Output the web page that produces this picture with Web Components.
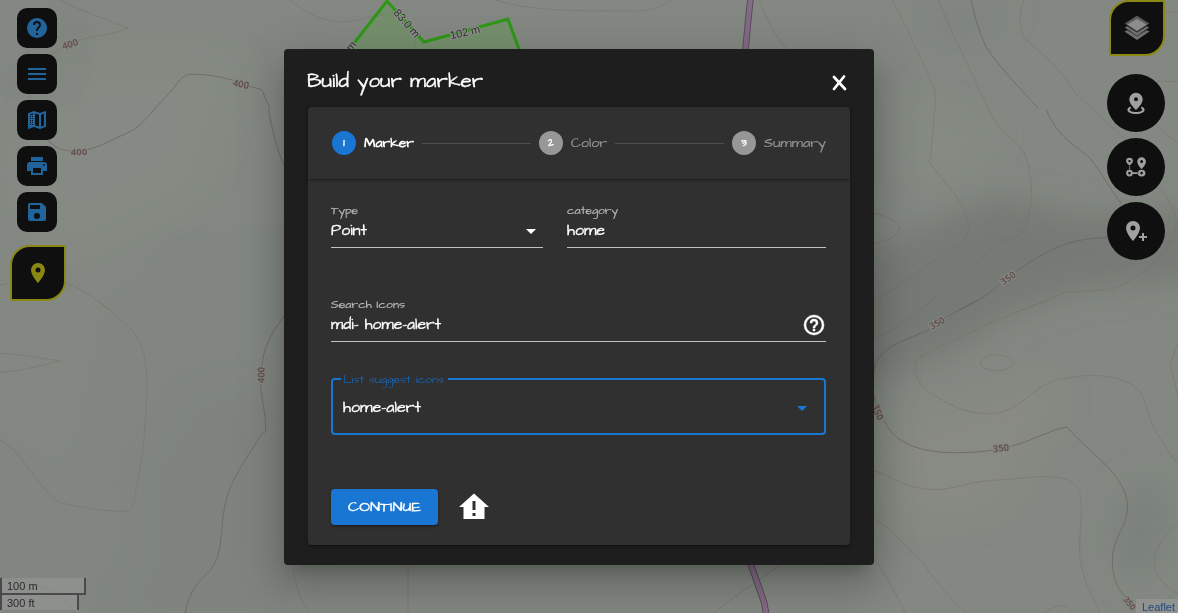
<!DOCTYPE html>
<html lang="en">
<head>
<meta charset="utf-8">
<title>Build your marker</title>
<style>
html,body{margin:0;height:100%;overflow:hidden;background:#848983}
body{font-family:"Architects Daughter",Lato,"Open Sans",sans-serif;color:#fff}
</style>
</head>
<body>
<marker-app></marker-app>
<script>
const ICONS = {
  help: 'M15.07,11.25L14.17,12.17C13.45,12.89 13,13.5 13,15H11V14.5C11,13.39 11.45,12.39 12.17,11.67L13.41,10.41C13.78,10.05 14,9.55 14,9C14,7.89 13.1,7 12,7A2,2 0 0,0 10,9H8A4,4 0 0,1 12,5A4,4 0 0,1 16,9C16,9.88 15.64,10.67 15.07,11.25M13,19H11V17H13M12,2A10,10 0 0,0 2,12A10,10 0 0,0 12,22A10,10 0 0,0 22,12C22,6.47 17.5,2 12,2Z',
  menu: 'M3,6H21V8H3V6M3,11H21V13H3V11M3,16H21V18H3V16Z',
  legend: 'M9,3L3.36,4.9C3.15,4.97 3,5.15 3,5.38V20.5A.5,.5 0 0,0 3.5,21L3.66,20.97L9,18.9L15,21L20.64,19.1C20.85,19.03 21,18.85 21,18.62V3.5A.5,.5 0 0,0 20.5,3L20.34,3.03L15,5.1L9,3M5,6.5L8,5.5V7H5V6.5M5,8H6V9H5M7,8H8V9H7M5,10H6V11H5M7,10H8V11H7M5,12H6V13H5M7,12H8V13H7M5,14H6V15H5M7,14H8V15H7M5,16H6V17H5M7,16H8V17H7M10,5.47L14,6.87V18.53L10,17.13V5.47M19,5.7V17.54L16,18.55V6.86L19,5.7Z',
  print: 'M18,3H6V7H18M19,12A1,1 0 0,1 18,11A1,1 0 0,1 19,10A1,1 0 0,1 20,11A1,1 0 0,1 19,12M16,19H8V14H16M19,8H5A3,3 0 0,0 2,11V17H6V21H18V17H22V11A3,3 0 0,0 19,8Z',
  save: 'M15,9H5V5H15M12,19A3,3 0 0,1 9,16A3,3 0 0,1 12,13A3,3 0 0,1 15,16A3,3 0 0,1 12,19M17,3H5C3.89,3 3,3.9 3,5V19A2,2 0 0,0 5,21H19A2,2 0 0,0 21,19V7L17,3Z',
  pin: 'M12,11.5A2.5,2.5 0 0,1 9.5,9A2.5,2.5 0 0,1 12,6.5A2.5,2.5 0 0,1 14.5,9A2.5,2.5 0 0,1 12,11.5M12,2A7,7 0 0,0 5,9C5,14.25 12,22 12,22C12,22 19,14.25 19,9A7,7 0 0,0 12,2Z',
  radius: 'M12,1.8A6.7,6.7 0 0,1 18.7,8.5C18.7,12.6 13.8,17.2 12,19C10.2,17.2 5.3,12.6 5.3,8.5A6.7,6.7 0 0,1 12,1.8M12,6.2A2,2 0 1,0 12,10.2A2,2 0 1,0 12,6.2M6.3,15.4C4.4,16.2 3.4,17.4 3.4,18.8C3.4,21.3 7,23 12,23C17,23 20.6,21.3 20.6,18.8C20.6,17.4 19.6,16.2 17.7,15.4L16.8,17.2C17.6,17.6 18.2,18.1 18.2,18.7C18.2,20 15.5,21 12,21C8.5,21 5.8,20 5.8,18.7C5.8,18.1 6.4,17.6 7.2,17.2Z',
  path: 'M17.6,2.3A4.3,4.3 0 0,1 21.9,6.6C21.9,9.6 18.8,13 17.6,14.3C16.4,13 13.3,9.6 13.3,6.6A4.3,4.3 0 0,1 17.6,2.3M17.6,5.1A1.5,1.5 0 1,0 17.6,8.1A1.5,1.5 0 1,0 17.6,5.1M5.5,2.7A3.4,3.4 0 0,1 8.9,6.1C8.9,8 6.4,10 5.5,10.7C4.6,10 2.1,8 2.1,6.1A3.4,3.4 0 0,1 5.5,2.7M5.5,4.9A1.2,1.2 0 1,0 5.5,7.3A1.2,1.2 0 1,0 5.5,4.9M5.5,14.7A3.4,3.4 0 1,1 5.5,21.5A3.4,3.4 0 1,1 5.5,14.7M5.5,16.8A1.3,1.3 0 1,0 5.5,19.4A1.3,1.3 0 1,0 5.5,16.8M17.6,14.9A3.3,3.3 0 1,1 17.6,21.4A3.3,3.3 0 1,1 17.6,14.9M17.6,16.8A1.3,1.3 0 1,0 17.6,19.4A1.3,1.3 0 1,0 17.6,16.8M8.9,17.3H14.3V18.9H8.9ZM4.9,11.4H6.2V12.4H4.9ZM4.9,13.2H6.2V14.2H4.9Z',
  plus: 'M9,11.5A2.5,2.5 0 0,0 11.5,9A2.5,2.5 0 0,0 9,6.5A2.5,2.5 0 0,0 6.5,9A2.5,2.5 0 0,0 9,11.5M9,2C12.86,2 16,5.13 16,9C16,14.25 9,22 9,22C9,22 2,14.25 2,9A7,7 0 0,1 9,2M15,17H18V14H20V17H23V19H20V22H18V19H15V17Z',
  helpOutline: 'M11,18H13V16H11V18M12,2A10,10 0 0,0 2,12A10,10 0 0,0 12,22A10,10 0 0,0 22,12A10,10 0 0,0 12,2M12,20C7.59,20 4,16.41 4,12C4,7.59 7.59,4 12,4C16.41,4 20,7.59 20,12C20,16.41 16.41,20 12,20M12,6A4,4 0 0,0 8,10H10A2,2 0 0,1 12,8A2,2 0 0,1 14,10C14,12 11,11.75 11,15H13C13,12.75 16,12.5 16,10A4,4 0 0,0 12,6Z',
  caret: 'M7,10L12,15L17,10H7Z',
  homeAlert: 'M12 3L2 12H5V20H19V12H22L12 3M13 18H11V16H13V18M13 14H11V8H13V14Z'
};
function define(name, html, after) {
  customElements.define(name, class extends HTMLElement {
    connectedCallback() {
      if (this.shadowRoot) return;
      const root = this.attachShadow({mode: 'open'});
      root.innerHTML = typeof html === 'function' ? html(this) : html;
      if (after) after(this, root);
    }
  });
}

/* An icon from the table above, size in pixels. */
define('mdi-icon', el => {
  const s = el.getAttribute('size') || 24;
  return `<style>:host{display:block;width:${s}px;height:${s}px;flex:none}svg{display:block}path{stroke:currentColor;stroke-width:var(--w,0)}</style>
  <svg width="${s}" height="${s}" viewBox="0 0 24 24"><path fill="currentColor" fill-rule="evenodd" d="${ICONS[el.getAttribute('name')]}"/></svg>`;
});

/* A single line of text stretched to the wide proportions of the hand-drawn face. */
define('fit-text', el => `<style>
  :host{display:block;flex:none;width:${el.getAttribute('width')}px;white-space:nowrap}
  span{display:inline-block;transform-origin:0 50%}</style><span><slot></slot></span>`,
  (el, root) => {
    const s = root.querySelector('span');
    const w = s.offsetWidth ? s.getBoundingClientRect().width : 0;
    if (w) s.style.transform = `scaleX(${el.getAttribute('width') / w})`;
  });

define('tool-button', `<style>
  :host{display:flex;align-items:center;justify-content:center;width:40px;height:40px;border-radius:10px;background:#0f0f0f;color:#21649b}
  :host([round]){width:58px;height:58px;border-radius:50%;color:#a0a0a0}
  :host([leaf]){box-sizing:border-box;width:56px;height:56px;border:2px solid #8b8713;border-radius:20px 2px 20px 2px;color:#8b8713}
  </style><slot></slot>`);

define('layers-icon', `<style>:host{display:block}svg{display:block}</style>
<svg width="26" height="26" viewBox="0 0 26 26">
<path fill="#6f6f6f" d="M.4 16.6 3.2 15.2 13 20.3 22.8 15.2 25.6 16.6 13 25Z"/>
<path fill="#6f6f6f" d="M.4 12.4 3.2 11 13 17 22.8 11 25.6 12.4 13 21.2Z" stroke="#0f0f0f" stroke-width=".5"/>
<path fill="#5c5c5c" d="M13 .4 25.6 8.6 13 17 .4 8.6Z" stroke="#0f0f0f" stroke-width=".4"/>
<path fill="#8c8c8c" d="M13 4 22.6 9.6 13 15.8 3.4 9.6Z"/></svg>`);

define('topo-map', `<style>
:host{display:block;width:1178px;height:613px}
svg{display:block}
path,ellipse{vector-effect:non-scaling-stroke}
.c{fill:none;stroke:#766c67;stroke-width:.8;opacity:.55}
.m{fill:none;stroke:#6a5f5b;stroke-width:.9;opacity:.75}
.t text{font:bold 9.5px "Noto Sans","Open Sans",sans-serif;fill:#665250;stroke:#858983;stroke-width:2px;paint-order:stroke;text-anchor:middle}
.d text{font:11px "Liberation Sans",sans-serif;fill:#30302f;stroke:#8d908c;stroke-width:2px;paint-order:stroke;text-anchor:middle}
</style>
<svg width="1178" height="613" viewBox="0 0 1178 613">
<defs><filter id="b" x="-40%" y="-40%" width="180%" height="180%"><feGaussianBlur stdDeviation="16"/></filter>
<filter id="s" x="-40%" y="-40%" width="180%" height="180%"><feGaussianBlur stdDeviation="2"/></filter></defs>
<rect width="1178" height="613" fill="#838982"/>
<g filter="url(#b)">
<path fill="#717670" opacity=".75" d="M850 270 920 225 1000 195 1080 215 1200 210V280L1080 290 1010 315 950 355 900 375 850 378Z"/>
<path fill="#777d77" opacity=".6" d="M1130 480 1170 490 1165 560 1125 585 1110 540Z"/>
<path fill="#8a8a84" opacity=".7" d="M890 430 1050 380 1060 400 1000 510 900 520Z"/>
<path fill="#7c827c" opacity=".5" d="M200 400 284 390V613H120L160 560 150 480ZM910 0H1010L990 45 930 50Z"/>
<path fill="#888d86" opacity=".5" d="M60 60 240 60 200 190 60 260 10 180ZM900 100 1000 130 960 180 900 160Z"/>
</g>
<g filter="url(#s)"><path fill="#7b817a" opacity=".22" d="M0 75 30 45 52 0H82L91 40 89 85 75 108 40 105 0 90ZM190 410 210 405 290 393V613H130L152 582 162 555 155 500ZM0 430 60 460 75 440 105 300 180 235 290 225V613H0Z"/></g>
<g transform="scale(.333333)">
<path class="c" d="M180 0C240 35 340 62 384 85C340 105 270 108 230 123C200 132 175 145 150 170M90 280V305"/>
<path class="m" d="M145 421C165 445 190 452 215 453M262 449C300 440 335 420 375 402C415 385 430 365 480 309C530 262 540 223 572 223C620 222 660 230 700 241M745 258L785 269L810 325M805 328C815 380 830 450 852 495"/>
<path class="c" d="M0 856L34 848M196 848C245 865 290 900 330 930"/>
</g>
<g transform="translate(0 300) scale(.333333)">
<path class="c" d="M293 0 380 75C430 120 440 180 441 260C438 370 430 470 408 570C400 620 395 632 378 634C300 635 230 618 175 607C130 570 90 510 60 470C35 440 15 430 0 422M0 160C60 162 120 175 182 183C120 195 60 215 0 217M0 832C110 850 190 870 224 939"/>
<path class="m" d="M852 48C810 105 790 145 785 202M782 250C784 300 797 330 797 394L782 407C740 475 690 540 676 610C660 680 670 760 635 805C610 835 575 850 555 939"/>
</g>
<path class="c" d="M290 0C320 25 345 25 370 17L397 13M495 0C540 14 600 10 640 11C655 9 665 5 671 0M759 0C767 20 775 36 787 49M415 35V50M292 565C296 585 300 600 309 613M408 565V613M714 613C735 595 760 580 780 565"/>
<g transform="translate(870 0) scale(.333333)">
<path class="c" d="M68 0C105 70 150 170 193 265L197 325M194 328L182 470 177 483C215 545 295 610 295 680C300 730 230 750 190 780C120 835 60 875 12 908M205 0C245 100 310 230 360 335C395 405 430 410 460 455C485 500 490 590 476 640C460 720 440 700 385 732C350 755 300 810 250 850C210 880 180 900 152 930M460 0C445 60 450 90 462 112C500 150 530 165 590 240C610 280 640 300 668 328L765 417M885 33 924 38M862 244H924M858 377 924 430M868 560C905 610 924 650 918 680C900 770 790 850 720 868L580 878C540 900 495 916 455 930M12 640C60 650 85 670 90 685C80 715 40 725 12 731"/>
<path class="m" d="M304 0C310 30 320 80 348 140C390 205 450 265 505 325M528 328C570 420 605 425 655 470C695 515 720 570 755 612M710 713C600 715 540 745 436 815M388 852C350 890 310 910 268 930"/>
</g>
<g transform="translate(870 300) scale(.333333)">
<path class="c" d="M12 112C60 105 100 65 192 0M535 0C400 50 300 95 145 174C130 180 130 245 175 275C240 315 280 340 350 341C460 345 480 250 580 236C680 215 760 230 800 265C830 290 830 345 850 380C875 425 900 460 924 495M12 512C70 530 100 565 190 569C250 570 290 545 370 541C430 538 480 530 520 530C620 530 632 560 634 620C635 680 625 710 630 770C638 840 665 890 690 939M12 658C60 680 100 735 162 792L180 820C220 870 250 905 290 939M12 774C45 820 80 885 106 939M520 939C550 922 590 900 603 939M924 130 900 190 915 250 924 295M924 665C870 720 855 750 853 785C855 830 885 860 924 882"/>
<ellipse class="c" cx="380" cy="188" rx="49" ry="24"/>
<path class="m" d="M322 0 222 55M178 88C100 125 12 145 12 218M12 285 18 315M42 362C75 430 140 455 250 458C300 458 340 455 370 450M416 441C480 425 540 390 590 381C640 435 690 475 720 508C770 565 775 610 772 630C770 680 728 710 727 785C728 850 755 880 772 895"/>
</g>
<path d="M751 -5Q748 20 745 56M750 562 764 602 767 618" fill="none" stroke="#59475c" stroke-width="6.6"/>
<path d="M751 -5Q748 20 745 56M750 562 764 602 767 618" fill="none" stroke="#826b84" stroke-width="4.8"/>
<path d="M348 51 387 1 424 42 508 19 520 52" fill="#4ba32f" fill-opacity=".25" stroke="#2e9715" stroke-width="3"/>
<g class="t">
<text transform="translate(70 44) rotate(-18)" y="3.5">400</text><text transform="translate(241 84) rotate(12)" y="3.5">400</text>
<text transform="translate(79 151)" y="3.5">400</text><text transform="translate(261 375) rotate(-88)" y="3.5">400</text>
<text transform="translate(1008 278) rotate(-35)" y="3.5">350</text><text transform="translate(937 323) rotate(-30)" y="3.5">350</text>
<text transform="translate(878 412) rotate(70)" y="3.5">350</text><text transform="translate(1001 448) rotate(-7)" y="3.5">350</text>
<text transform="translate(1130 603) rotate(52)" y="3.5" style="font-size:8.5px">350</text></g>
<g class="d"><text transform="translate(407 23) rotate(49)" y="4">83.0 m</text><text transform="translate(465 32) rotate(-13)" y="4">102 m</text><text transform="translate(351 46) rotate(-49)" y="4">m</text></g>
</svg>`);

define('map-scale', `<style>
:host{display:flex;flex-direction:column;align-items:flex-start;margin-bottom:3px;font:11px/13px "Liberation Sans",sans-serif;color:#2b2b2b}
div{box-sizing:border-box;border:2px solid #4a4a4a;border-top:0;padding:2px 5px 0;background:rgba(153,153,153,.5);white-space:nowrap}
.m{width:86px;height:17px}.f{width:79px;height:15px;border-bottom:0;padding-top:2px}
</style><div class="m">100 m</div><div class="f">300 ft</div>`);

define('step-item', el => `<style>
:host{display:flex;align-items:center;gap:8px;font-size:14px;line-height:20px;color:#929292;flex:none;-webkit-text-stroke:.2px #929292}
i{display:flex;align-items:center;justify-content:center;width:24px;height:24px;border-radius:50%;background:#979797;color:#fff;font-size:11px;font-style:normal;-webkit-text-stroke:.4px #fff}
:host([active]) i{background:#1976d2;font-weight:400}:host([active]){color:#fff;font-weight:bold;-webkit-text-stroke:0}
</style><i>${el.getAttribute('n')}</i><slot></slot>`);

define('line-field', `<style>
:host{display:flex;flex-direction:column;box-sizing:border-box;height:45px;border-bottom:1px solid #c1c1c1;font-size:15px;line-height:20px}
.l{font-size:11px;line-height:16px;height:18px;color:#b7b7b7;-webkit-text-stroke:.2px #b7b7b7}
.v{display:flex;align-items:center;justify-content:space-between;height:20px;-webkit-text-stroke:.3px #fff}
</style><div class="l"><slot name="label"></slot></div><div class="v"><slot></slot><slot name="end"></slot></div>`);

define('outlined-select', `<style>
:host{display:block}
fieldset{box-sizing:border-box;height:64px;margin:0;padding:0 10px;border:2px solid #1976d2;border-radius:4px;min-width:0}
legend{box-sizing:border-box;width:107px;height:16px;padding:0 2px;font-size:11px;line-height:18px;color:#1b63ab;margin-left:-2px}
.v{display:flex;align-items:center;justify-content:space-between;height:41px;font-size:15px;line-height:20px;-webkit-text-stroke:.3px #fff}
</style><fieldset><legend><slot name="label"></slot></legend><div class="v"><slot></slot><slot name="end"></slot></div></fieldset>`);

define('marker-dialog', `<style>
:host{display:flex;flex-direction:column;box-sizing:border-box;width:590px;height:516px;padding:0 24px 20px;border-radius:4px;background:#1e1e1e;
box-shadow:0 11px 15px -7px rgba(0,0,0,.2),0 24px 38px 3px rgba(0,0,0,.14),0 9px 46px 8px rgba(0,0,0,.12)}
header{display:flex;height:58px;align-items:center;justify-content:space-between;font-size:20px;line-height:28px;padding:6px 3px 0 0;box-sizing:border-box;margin-left:-1px;-webkit-text-stroke:.3px #fff}
.card{width:542px;height:438px;border-radius:4px;background:#303030;box-shadow:0 3px 1px -2px rgba(0,0,0,.2),0 2px 2px 0 rgba(0,0,0,.14),0 1px 5px 0 rgba(0,0,0,.12)}
.steps{display:flex;align-items:center;gap:8px;box-sizing:border-box;height:72px;padding:0 24px;box-shadow:0 3px 1px -2px rgba(0,0,0,.2),0 1px 3px 0 rgba(0,0,0,.25)}
hr{flex:1;height:1px;border:0;margin:0;background:#4e4e4e}
.body{padding:24px 24px 0 23px}
.row{display:grid;grid-template-columns:212px 259px;gap:24px;margin-bottom:49px}
.sel{margin-top:29px}
.act{display:flex;align-items:center;margin-top:54px;height:36px}
.btn{display:flex;align-items:center;justify-content:center;width:107px;height:36px;border-radius:4px;background:#1976d2;font-size:14px;line-height:20px;margin-right:18px;-webkit-text-stroke:.3px #fff;
box-shadow:0 3px 1px -2px rgba(0,0,0,.2),0 2px 2px 0 rgba(0,0,0,.14),0 1px 5px 0 rgba(0,0,0,.12)}
</style>
<header><fit-text width="176">Build your marker</fit-text>
<svg width="15" height="16" viewBox="0 0 15 16" style="margin-top:4px"><path d="M2 2 13 14M12 1.5 2 14" fill="none" stroke="#fff" stroke-width="2.7" stroke-linecap="round"/></svg></header>
<div class="card"><div class="steps">
<step-item n="1" active><fit-text width="50">Marker</fit-text></step-item><hr>
<step-item n="2"><fit-text width="36">Color</fit-text></step-item><hr>
<step-item n="3"><fit-text width="62">Summary</fit-text></step-item></div>
<div class="body"><div class="row">
<line-field><fit-text slot="label" width="27">Type</fit-text><fit-text width="36">Point</fit-text><mdi-icon slot="end" name="caret"></mdi-icon></line-field>
<line-field><fit-text slot="label" width="51">category</fit-text><fit-text width="38">home</fit-text></line-field></div>
<line-field><fit-text slot="label" width="74">Search Icons</fit-text><fit-text width="110">mdi- home-alert</fit-text><mdi-icon slot="end" name="helpOutline" style="--w:.5"></mdi-icon></line-field>
<outlined-select class="sel"><fit-text slot="label" width="101">List suggest icons</fit-text><fit-text width="78">home-alert</fit-text><mdi-icon slot="end" name="caret" style="color:#1976d2"></mdi-icon></outlined-select>
<div class="act"><div class="btn"><fit-text width="73">CONTINUE</fit-text></div><mdi-icon name="homeAlert" size="36"></mdi-icon></div>
</div></div>`);

define('marker-app', `<style>
:host{display:grid;width:1178px;height:613px;overflow:hidden}
:host>*{grid-area:1/1}
.ui{display:flex;justify-content:space-between;position:relative}
.left{display:flex;flex-direction:column;justify-content:space-between;width:90px}
.tools{display:flex;flex-direction:column;gap:6px;padding:8px 0 0 17px}
.leaf{margin:7px 0 0 -7px}
.right{display:flex;flex-direction:column;align-items:flex-end;justify-content:space-between}
.r{display:flex;flex-direction:column;gap:6px;padding-right:13px;align-items:flex-end}
.layers{margin-bottom:12px}
.leaflet{display:flex;box-sizing:border-box;height:14px;width:42px;justify-content:flex-end;padding-right:3px;background:rgba(153,153,153,.6);font:11px/16px "Liberation Sans",sans-serif;color:#1f497b}
marker-dialog{position:relative;margin:49px 0 0 284px}
.tools mdi-icon{margin-left:-1px}
</style>
<topo-map></topo-map>
<div class="ui"><div class="left"><div class="tools">
<tool-button><mdi-icon name="help"></mdi-icon></tool-button><tool-button><mdi-icon name="menu"></mdi-icon></tool-button><tool-button><mdi-icon name="legend"></mdi-icon></tool-button><tool-button><mdi-icon name="print"></mdi-icon></tool-button><tool-button><mdi-icon name="save"></mdi-icon></tool-button>
<tool-button class="leaf" leaf><mdi-icon name="pin"></mdi-icon></tool-button></div><map-scale></map-scale></div>
<div class="right"><div class="r"><tool-button class="layers" leaf><layers-icon></layers-icon></tool-button>
<tool-button round><mdi-icon name="radius"></mdi-icon></tool-button><tool-button round><mdi-icon name="path"></mdi-icon></tool-button><tool-button round><mdi-icon name="plus"></mdi-icon></tool-button></div>
<div class="leaflet">Leaflet</div></div></div>
<marker-dialog></marker-dialog>`);
</script>
</body>
</html>
